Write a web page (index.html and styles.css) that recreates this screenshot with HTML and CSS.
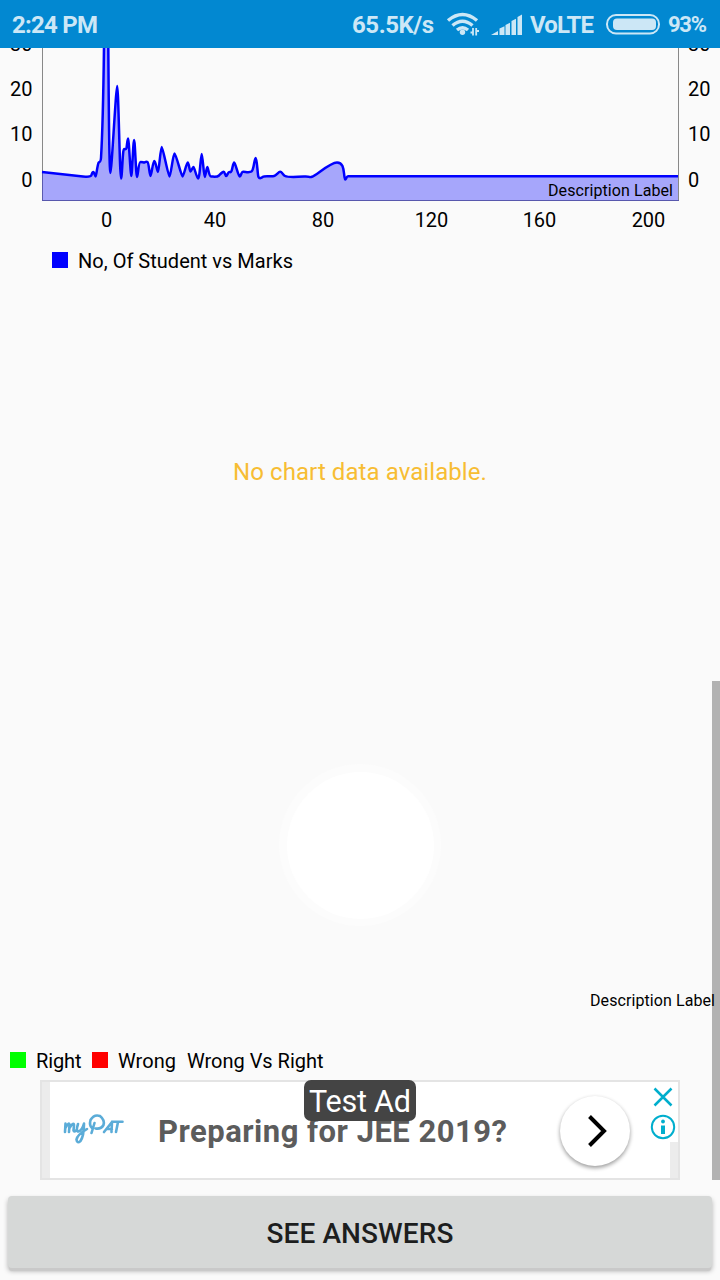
FILE: index.html
```html
<!DOCTYPE html>
<html lang="en">
<head>
<meta charset="utf-8">
<title>Result analysis</title>
<link rel="stylesheet" href="styles.css">
</head>
<body>
<div class="screen">
  <header class="status">
    <svg class="status-svg" width="720" height="48" viewBox="0 0 720 48">
      <g class="status-text">
        <text x="12" y="33" textLength="86">2:24 PM</text>
        <text x="352" y="33" textLength="82">65.5K/s</text>
        <text x="530" y="33" textLength="64">VoLTE</text>
        <text x="668" y="32" textLength="39" class="pct">93%</text>
      </g>
      <g class="wifi">
        <path d="M448 20.500Q462.500 8.500 477 20.500M452.500 25.500Q462.500 17 472.500 25.500M457 30Q462.500 25.500 468 30"/>
        <path class="thin" d="M473 28v7.500M476.200 28v7.500M470.500 32.500h2M476 31h3"/>
      </g>
      <g class="light">
        <circle cx="462.500" cy="32.300" r="2.700"/>
        <path d="M491 35l7-4v4zM499.500 28.500l5-2.200V35h-5zM505.500 25l4.500-2.200V35h-4.500zM511.500 21l4.500-2.200V35h-4.500zM517.500 17l4.500-2.500V35h-4.500z"/>
        <rect x="613" y="18.500" width="43" height="11.500" rx="4"/>
      </g>
      <rect class="cell" x="607" y="15" width="52" height="18.500" rx="9"/>
    </svg>
  </header>
  <main class="content">
    <svg class="chart" width="720" height="232" viewBox="0 48 720 232">
      <path class="axis" d="M42.500 48V200.500M678.500 48V200.500"/>
      <path class="area" d="M42 172L83 176.500S91 177.200 91.500 175S93 172 93.500 172S95.200 176.500 95.700 176.500S97.500 164 98.700 162.500S100.500 163 101 158Q103 125 104 46L108.300 46C109 140 109.500 173 110.500 173S116 86 117.200 86S119.800 178.500 121 178.500S122.500 149 124 149S126 150 126.500 148S127.300 138.500 128.100 138.500S130.500 176 131.300 176S133.200 140 134.100 140S136 177 137 177S138.300 162 140.500 162S143 162.500 144 162.500S146 161 147.500 162S149.500 176 150.500 176S152.800 161 154.300 161S157 172 158 172S160.500 147 161.700 147S168.200 176.500 169.500 176.500S173 153.500 174.500 153.500S181.300 176.500 182.500 176.500S186.500 162.500 187.700 162.500S189.600 171.500 190.500 171.500S192.500 167 193.500 167S196.600 178.500 198.200 178.500S200.800 154 201.700 154S203.900 177 204.700 177S206.500 167 207.300 167S209 176.500 211 176.500S217 177.500 219 175.500S222.500 171.800 223.700 171.800S225.200 176 226.200 176S228 172 229.200 172S230.500 173 231.500 171S233 162.500 234.200 162.500S238.300 176.500 239.700 176.500S241 172 243 171.800S249 173 251.500 171.500S254.300 158 255.700 158S257.500 175 258.500 177S261.500 178 263 176.800S272 177 274.500 175.800S278.500 171.800 280.200 171.800S283 175 285 176S297 177 304 176.500S308 178 312 176.800S330 162.500 337 162.500S343.500 171 344.500 177S346 176.300 348 176.300L678 176.300V200H42Z"/>
      <path class="line" d="M42 172L83 176.500S91 177.200 91.500 175S93 172 93.500 172S95.200 176.500 95.700 176.500S97.500 164 98.700 162.500S100.500 163 101 158Q103 125 104 46M108.300 46C109 140 109.500 173 110.500 173S116 86 117.200 86S119.800 178.500 121 178.500S122.500 149 124 149S126 150 126.500 148S127.300 138.500 128.100 138.500S130.500 176 131.300 176S133.200 140 134.100 140S136 177 137 177S138.300 162 140.500 162S143 162.500 144 162.500S146 161 147.500 162S149.500 176 150.500 176S152.800 161 154.300 161S157 172 158 172S160.500 147 161.700 147S168.200 176.500 169.500 176.500S173 153.500 174.500 153.500S181.300 176.500 182.500 176.500S186.500 162.500 187.700 162.500S189.600 171.500 190.500 171.500S192.500 167 193.500 167S196.600 178.500 198.200 178.500S200.800 154 201.700 154S203.900 177 204.700 177S206.500 167 207.300 167S209 176.500 211 176.500S217 177.500 219 175.500S222.500 171.800 223.700 171.800S225.200 176 226.200 176S228 172 229.200 172S230.500 173 231.500 171S233 162.500 234.200 162.500S238.300 176.500 239.700 176.500S241 172 243 171.800S249 173 251.500 171.500S254.300 158 255.700 158S257.500 175 258.500 177S261.500 178 263 176.800S272 177 274.500 175.800S278.500 171.800 280.200 171.800S283 175 285 176S297 177 304 176.500S308 178 312 176.800S330 162.500 337 162.500S343.500 171 344.500 177S346 176.300 348 176.300L678 176.300"/>
      <path class="base" d="M42 200.500H679"/>
      <g class="tick end">
        <text x="32.500" y="50.500">30</text><text x="32.500" y="96">20</text><text x="32.500" y="141">10</text><text x="32.500" y="187">0</text>
      </g>
      <g class="tick">
        <text x="688" y="50.500">30</text><text x="688" y="96">20</text><text x="688" y="141">10</text><text x="688" y="187">0</text>
      </g>
      <g class="tick mid">
        <text x="106.500" y="227">0</text><text x="215" y="227">40</text><text x="323" y="227">80</text><text x="431.500" y="227">120</text><text x="539.500" y="227">160</text><text x="648.500" y="227">200</text>
      </g>
      <text class="desc" x="548" y="196" textLength="125">Description Label</text>
      <rect class="blue" x="52" y="252" width="16" height="16"/>
      <text class="tick" x="78" y="268" textLength="215">No, Of Student vs Marks</text>
    </svg>
    <section class="empty"><p>No chart data available.</p></section>
    <section class="pie">
      <div class="ring"><div class="hole"></div></div>
      <svg class="pie-foot" width="720" height="100" viewBox="0 980 720 100">
        <text class="desc" x="590" y="1006" textLength="125">Description Label</text>
        <rect class="green" x="10" y="1052" width="16" height="16"/>
        <rect class="red" x="92" y="1052" width="16" height="16"/>
        <g class="tick">
          <text x="36" y="1068" textLength="45.500">Right</text>
          <text x="118" y="1068" textLength="58">Wrong</text>
          <text x="187" y="1068" textLength="136.500">Wrong Vs Right</text>
        </g>
      </svg>
    </section>
    <aside class="ad">
      <svg width="640" height="100" viewBox="40 1080 640 100">
        <defs><filter id="soft" x="-20%" y="-20%" width="140%" height="140%"><feGaussianBlur stdDeviation="2"/></filter></defs>
        <rect class="ad-frame" x="41" y="1081" width="638" height="98"/>
        <path class="ad-side" d="M42 1082h8v96h-8zM670 1142h8v36h-8z"/>
        <g class="brand">
          <path d="M65.500 1123.500L65 1132M65.500 1128Q69 1121.500 69.500 1124.500L69 1132M69.500 1128Q73.500 1121.500 74 1125L73.500 1130.500Q74 1132.500 76 1130.500M78 1124Q75.500 1131.500 78.500 1131.500Q82 1130.500 84 1123.500Q84 1136 80.500 1141Q77 1144 76.500 1139.500Q77 1135 87 1129"/>
          <path d="M94.500 1123L91.500 1133M92 1128Q89 1125.500 90.500 1120Q94 1114 100 1116Q105 1120 103.500 1125Q101 1129.500 95.500 1128.500"/>
          <path d="M104 1132L112 1122L111.500 1132M107 1129H112M112 1121.700H122.500M118 1122L116 1132"/>
        </g>
        <text class="headline" x="158" y="1142" textLength="349">Preparing for JEE 2019?</text>
        <circle class="shade" cx="595" cy="1133" r="35" filter="url(#soft)"/>
        <circle class="white" cx="595" cy="1131" r="35"/>
        <path class="arrow" d="M589.500 1116.500L604 1131L589.500 1145.500"/>
        <path class="close" d="M654.500 1088.500L671.500 1105.500M671.500 1088.500L654.500 1105.500"/>
        <circle class="info" cx="663" cy="1127" r="11.200"/>
        <circle class="info-dot" cx="663" cy="1121.500" r="1.900"/>
        <path class="info-dot" d="M661 1125.500h4v8.500h-4z"/>
        <rect class="badge" x="304" y="1080" width="112" height="41" rx="7"/>
        <text class="badge-text" x="309" y="1112" textLength="102">Test Ad</text>
      </svg>
    </aside>
    <div class="scrollbar"></div>
  </main>
  <footer class="actions"><button class="answers">SEE ANSWERS</button></footer>
</div>
</body>
</html>
```
FILE: styles.css
```css
* { box-sizing: border-box; }
body { margin: 0; font-family: Roboto, "Liberation Sans", sans-serif; background: #fafafa; }
svg { display: block; }
.screen { width: 720px; height: 1280px; display: flex; flex-direction: column; overflow: hidden; }
.status { height: 48px; background: #0288d1; }
.status-text { font-size: 24px; font-weight: 700; fill: #cce7f6; }
.status-text .pct { font-size: 22px; }
.light { fill: #cce7f6; }
.wifi { fill: none; stroke: #cce7f6; stroke-width: 3.5; }
.wifi .thin { stroke-width: 1.8; }
.cell { fill: none; stroke: #cce7f6; stroke-width: 2; }
.content { height: 1132px; position: relative; }
.axis { fill: none; stroke: #888; }
.area { fill: #0000ff; fill-opacity: 0.333; }
.line { fill: none; stroke: #0000ff; stroke-width: 2.5; stroke-linejoin: round; }
.base { stroke: #5858ad; }
.tick { font-size: 20px; fill: #000; }
.end { text-anchor: end; }
.mid { text-anchor: middle; }
.desc { font-size: 16px; fill: #000; }
.blue { fill: #0000ff; }
.green { fill: #00ff00; }
.red { fill: #ff0000; }
.empty { height: 400px; padding-top: 178px; text-align: center; }
.empty p { margin: 0; font-size: 24px; line-height: 28px; color: #f7bd33; letter-spacing: 0.08px; }
.pie { height: 400px; padding-top: 84px; display: flex; flex-direction: column; justify-content: space-between; align-items: center; }
.ring { width: 162px; height: 162px; padding: 7.5px; border-radius: 50%; background: #fcfcfc; }
.hole { width: 147px; height: 147px; border-radius: 50%; background: #fff; }
.pie-foot { position: relative; z-index: 1; }
.ad { height: 100px; margin: 0 40px; background: #fff; }
.ad-frame { fill: #fff; stroke: #e4e4e4; stroke-width: 2; }
.ad-side { fill: #ececec; }
.brand { fill: none; stroke: #5bacd8; stroke-width: 2.6; stroke-linecap: round; stroke-linejoin: round; }
.headline { font-size: 31px; font-weight: 700; fill: #5c5c5c; }
.shade { fill: #000; opacity: 0.4; }
.white { fill: #fff; }
.arrow { fill: none; stroke: #000; stroke-width: 4; }
.close { stroke: #00aecd; stroke-width: 2.5; }
.info { fill: none; stroke: #00aecd; stroke-width: 2; }
.info-dot { fill: #00aecd; }
.badge { fill: #444; }
.badge-text { font-size: 30.5px; fill: #fff; }
.scrollbar { position: absolute; right: 0; top: 633px; width: 8px; height: 499px; background: #b2b2b2; }
.actions { height: 100px; padding: 16px 8px 8px; }
.answers { display: block; width: 704px; height: 72px; margin: 0; padding: 2px 0 0; border: 0; border-radius: 4px; background: #d6d8d7; box-shadow: 0 4px 1px -1px #c9c9c9, 0 3px 5px rgba(0,0,0,0.3); font: 500 28px Roboto, "Liberation Sans", sans-serif; letter-spacing: 0.1px; color: #1d1e1e; }
```
